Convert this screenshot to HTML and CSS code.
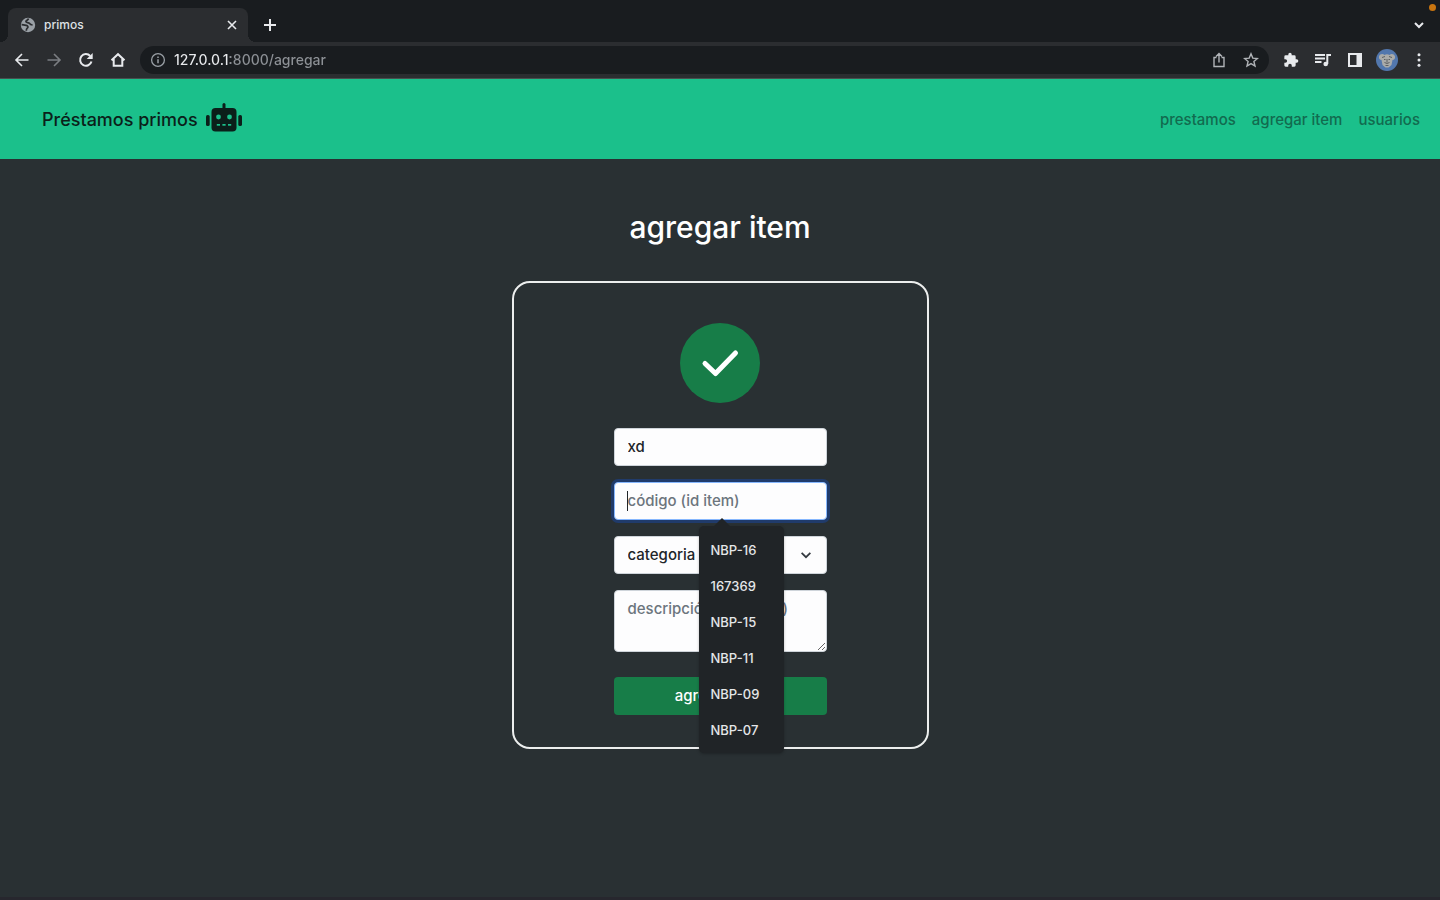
FILE: index.html
```html
<!DOCTYPE html>
<html lang="es">
<head>
<meta charset="utf-8">
<meta name="viewport" content="width=device-width, initial-scale=1">
<title>primos</title>
<link rel="stylesheet" href="styles.css">
</head>
<body>
<div class="browser">
  <div class="tabstrip">
    <div class="tab">
      <svg class="favicon" viewBox="0 0 16 16" aria-hidden="true"><circle cx="8" cy="8" r="7.2" fill="#9aa0a6"/><path d="M8.500 1.500c-.3 1.800-2.300 1.600-2.600 3 .1 1.500 2.600.7 3.600 1.900.7 1.300 1.600 1.500 3.100 1.600M1.600 7.600c1.400.2 3 .5 4.600.8 1.600.5 2.200 1.300 1.500 2.300-.8.700-1.500 1.300-1.400 3" fill="none" stroke="#2b2d30" stroke-width="1.700"/></svg>
      <span class="tab-title">primos</span>
      <button class="icon-btn tab-close" aria-label="Cerrar pestaña"><svg viewBox="0 0 16 16"><path d="M4 4l8 8M12 4l-8 8" class="line"/></svg></button>
    </div>
    <button class="icon-btn new-tab" aria-label="Nueva pestaña"><svg viewBox="0 0 16 16"><path d="M8 2v12M2 8h12" class="line bold"/></svg></button>
    <button class="icon-btn tab-search" aria-label="Buscar pestañas"><svg viewBox="0 0 16 16"><path d="M4 6l4 4 4-4" class="line bold"/></svg></button>
    <span class="recording-dot"></span>
  </div>
  <div class="toolbar">
    <button class="icon-btn" aria-label="Atrás"><svg viewBox="0 0 16 16"><path d="M14.500 8H2M8 2L2 8l6 6" class="line"/></svg></button>
    <button class="icon-btn dim" aria-label="Adelante"><svg viewBox="0 0 16 16"><path d="M1.500 8H14M8 2l6 6-6 6" class="line"/></svg></button>
    <button class="icon-btn" aria-label="Recargar"><svg viewBox="0 0 16 16"><path d="M13.500 9.500A5.800 5.800 0 1 1 12.200 4" class="line bold"/><path d="M14.700 1v6h-6z" fill="currentColor"/></svg></button>
    <button class="icon-btn" aria-label="Inicio"><svg viewBox="0 0 16 16"><path d="M1.500 8.200L8 2.200l6.500 6M3.700 7v6.800h8.600V7" class="line bold"/></svg></button>
    <div class="omnibox">
      <svg class="info" viewBox="0 0 16 16" aria-hidden="true"><circle cx="8" cy="8" r="6.400" fill="none" stroke="currentColor" stroke-width="1.300"/><path d="M8 7.200v4M8 4.400v1.500" stroke="currentColor" stroke-width="1.500"/></svg>
      <input class="url" type="text" aria-label="Dirección" value="127.0.0.1:8000/agregar">
      <button class="icon-btn soft" aria-label="Compartir"><svg viewBox="0 0 16 16"><path d="M5.500 5.500H3v9h10v-9h-2.500M8 10.500V2M5 4.500l3-3 3 3" class="line thin"/></svg></button>
      <button class="icon-btn soft" aria-label="Favorito"><svg viewBox="0 0 16 16"><path d="M8 1.800l1.800 4.300 4.600.4-3.500 3 1.100 4.500-4-2.400L4 14l1.100-4.500-3.500-3 4.600-.4z" class="line thin"/></svg></button>
    </div>
    <button class="icon-btn" aria-label="Extensiones"><svg viewBox="0 0 24 24"><path fill="currentColor" d="M20.500 11H19V7a2 2 0 0 0-2-2h-4V3.500a2.500 2.500 0 0 0-5 0V5H4a2 2 0 0 0-2 2v3.800h1.500a2.700 2.700 0 0 1 0 5.400H2V20a2 2 0 0 0 2 2h3.800v-1.500a2.700 2.700 0 0 1 5.400 0V22H17a2 2 0 0 0 2-2v-4h1.500a2.500 2.500 0 0 0 0-5z"/></svg></button>
    <button class="icon-btn" aria-label="Control multimedia"><svg viewBox="0 0 16 16"><path d="M0 3h10M0 6.500h10M0 10h6.500" class="line bold"/><path d="M12.300 12V3H16" class="line bold"/><circle cx="10.700" cy="12" r="2.300" fill="currentColor"/></svg></button>
    <button class="icon-btn" aria-label="Panel lateral"><svg viewBox="0 0 16 16"><path fill="currentColor" fill-rule="evenodd" d="M1 1h14v14H1zM3 3v10h6.500V3z"/></svg></button>
    <button class="icon-btn profile" aria-label="Perfil"><svg viewBox="0 0 22 22"><circle cx="11" cy="11" r="11" fill="#5277ad"/><path fill="#aaaba9" d="M3 7.500C4 4.500 7 4.500 8.500 6c1.500-1 3.500-1 5 0 1.500-1.500 4.500-1.500 5.500 1.500.3 2-.7 3.500-2.500 3.500l-1 5-3 2.500h-3l-3-2.500-1-5C3.700 11 2.700 9.500 3 7.500z"/><path fill="none" stroke="#5d6062" d="M6 8.500l3-1M16 8.500l-3-1M8 10.500h1.500M12.500 10.500H14M11 10v3.500M8.500 13.500l2.500 1 2.500-1M9.500 16.500h3"/></svg></button>
    <button class="icon-btn" aria-label="Menú"><svg viewBox="0 0 16 16" fill="currentColor"><circle cx="8" cy="2.800" r="1.500"/><circle cx="8" cy="8" r="1.500"/><circle cx="8" cy="13.200" r="1.500"/></svg></button>
  </div>
</div>

<header class="navbar">
  <a class="brand" href="#">Préstamos primos
    <svg viewBox="0 0 36 30" aria-hidden="true"><g fill="#0b1f1a"><rect x="16.500" y="0" width="3" height="8" rx="1.500"/><rect x="5.500" y="5" width="25" height="23.500" rx="4"/><rect x="0" y="12" width="3.700" height="11" rx="1.600"/><rect x="32.300" y="12" width="3.700" height="11" rx="1.600"/></g><g fill="#1bc08b"><circle cx="12.500" cy="14" r="2.400"/><circle cx="23.500" cy="14" r="2.400"/><rect x="10.800" y="21" width="3.200" height="1.700"/><rect x="16.400" y="21" width="3.200" height="1.700"/><rect x="22" y="21" width="3.200" height="1.700"/></g></svg></a>
  <nav class="links">
    <a href="#">prestamos</a>
    <a href="#">agregar item</a>
    <a href="#">usuarios</a>
  </nav>
</header>

<main class="page">
  <h1>agregar item</h1>
  <form class="card">
    <svg class="success" viewBox="0 0 80 80" aria-hidden="true"><circle cx="40" cy="40" r="40" fill="#177d48"/><path d="M25 40.500L35.500 50.500 55.500 30" fill="none" stroke="#fff" stroke-width="5" stroke-linecap="round" stroke-linejoin="round"/></svg>
    <div class="fields">
      <input class="control" type="text" aria-label="nombre" value="xd">
      <div class="autocomplete">
        <input class="control active" type="text" aria-label="código" placeholder="código (id item)">
        <ul class="suggestions">
          <li>NBP-16</li>
          <li>167369</li>
          <li>NBP-15</li>
          <li>NBP-11</li>
          <li>NBP-09</li>
          <li>NBP-07</li>
        </ul>
      </div>
      <div class="select-wrap">
        <select class="control" aria-label="categoria"><option>categoria</option></select>
        <svg viewBox="0 0 16 16" aria-hidden="true"><path d="M3 5.500l5 5 5-5" class="line bold"/></svg>
      </div>
      <textarea class="control" rows="2" aria-label="descripción" placeholder="descripción (opcional)"></textarea>
      <button class="submit" type="submit">agregar item</button>
    </div>
  </form>
</main>
</body>
</html>
```
FILE: styles.css
```css
*, *::before, *::after { box-sizing: border-box; }

body {
  margin: 0;
  min-height: 100vh;
  display: flex;
  flex-direction: column;
  background: #293033;
  border-bottom: 3px solid #27272e;
  color: #fff;
  font-family: Inter, "Liberation Sans", sans-serif;
  font-size: 15px;
  line-height: 24px;
}

button, input, select, textarea { font: inherit; }
a { text-decoration: none; }

.line {
  fill: none;
  stroke: currentColor;
  stroke-width: 1.6;
}
.line.bold { stroke-width: 2; }
.line.thin { stroke-width: 1.4; }

.icon-btn {
  flex: none;
  display: grid;
  place-items: center;
  width: 16px;
  height: 16px;
  padding: 0;
  border: 0;
  background: none;
  color: #e8eaed;
}
.icon-btn svg { display: block; width: 100%; height: 100%; }
.icon-btn.dim { color: #7b7e82; }
.icon-btn.soft { color: #b0b3b7; }

/* Browser chrome */
.tabstrip {
  position: relative;
  display: flex;
  align-items: center;
  height: 42px;
  padding: 8px 13px 0 8px;
  background: #191c1f;
}
.tab {
  position: relative;
  display: flex;
  align-items: center;
  gap: 8px;
  width: 240px;
  height: 34px;
  padding: 0 8px 0 12px;
  border-radius: 8px 8px 0 0;
  background: #2b2d30;
}
.tab::before, .tab::after {
  content: "";
  position: absolute;
  bottom: 0;
  width: 8px;
  height: 8px;
}
.tab::before { right: 100%; background: radial-gradient(circle at 0 0, transparent 8px, #2b2d30 8px); }
.tab::after { left: 100%; background: radial-gradient(circle at 100% 0, transparent 8px, #2b2d30 8px); }
.favicon { width: 16px; height: 16px; }
.tab-title { flex: 1; font-size: 12px; font-weight: 500; color: #dfe1e5; }
.new-tab { margin-left: 14px; }
.tab-search { margin-left: auto; }
.recording-dot {
  position: absolute;
  top: 4px;
  right: 4px;
  width: 7px;
  height: 7px;
  border-radius: 50%;
  background: #c87510;
}
.toolbar {
  display: flex;
  align-items: center;
  gap: 16px;
  height: 37px;
  padding: 0 13px 0 14px;
  border-bottom: 1px solid #46504e;
  background: #2b2d30;
}
.omnibox {
  flex: 1;
  display: flex;
  align-items: center;
  gap: 16px;
  height: 28px;
  margin-left: -2px;
  margin-right: -2px;
  padding: 0 10px;
  border-radius: 14px;
  background: #191c1f;
}
.info { width: 16px; height: 16px; color: #9aa0a6; }
.url {
  flex: 1;
  min-width: 0;
  height: 24px;
  margin-left: -8px;
  padding: 0;
  border: 0;
  outline: 0;
  background: linear-gradient(90deg, #e8eaed 56px, #8d9196 56px);
  -webkit-background-clip: text;
  background-clip: text;
  -webkit-text-fill-color: transparent;
  font-size: 14px;
  font-weight: 500;
}
.profile { width: 22px; height: 22px; margin: 0 -3px; }

/* Site navigation */
.navbar {
  display: flex;
  align-items: center;
  justify-content: space-between;
  height: 80px;
  padding: 2px 20px 0 42px;
  background: #1bc08b;
}
.brand {
  display: flex;
  align-items: center;
  gap: 8px;
  color: #0b1f1a;
  font-size: 18px;
  font-weight: 500;
}
.brand svg { width: 36px; height: 30px; margin-bottom: 4px; }
.links { display: flex; gap: 16px; }
.links a { color: #126b4f; font-weight: 500; }

/* Form */
.page {
  flex: 1;
  display: flex;
  flex-direction: column;
  align-items: center;
  padding: 48px 16px;
}
h1 {
  margin: 0 0 34px;
  font-size: 30px;
  font-weight: 500;
  line-height: 40px;
}
.card {
  display: flex;
  flex-direction: column;
  align-items: center;
  gap: 25px;
  width: 100%;
  max-width: 417px;
  padding: 40px 32px 32px;
  border: 2px solid #eceeee;
  border-radius: 18px;
}
.success { width: 80px; height: 80px; }
.fields {
  display: flex;
  flex-direction: column;
  gap: 16px;
  width: 100%;
  max-width: 213px;
}
.control {
  display: block;
  width: 100%;
  min-height: 38px;
  margin: 0;
  padding: 6px 13px;
  border: 1px solid #ced4da;
  border-radius: 4px;
  outline: 0;
  background: #fdfdfe;
  color: #212529;
  font-weight: 500;
}
.control::placeholder { color: #6c757d; opacity: 1; }
.active {
  border-color: #86b7fe;
  box-shadow: 0 0 0 3px #203b6b;
  background: linear-gradient(#212529, #212529) 12px 50% / 1px 20px no-repeat #fdfdfe;
}
textarea.control { height: 62px; resize: vertical; }
.select-wrap { position: relative; color: #343a40; }
.select-wrap select { appearance: none; }
.select-wrap svg {
  position: absolute;
  top: 12px;
  right: 14px;
  width: 14px;
  height: 14px;
  pointer-events: none;
}
.submit {
  height: 38px;
  margin-top: 9px;
  padding: 0;
  border: 0;
  border-radius: 4px;
  background: #177d48;
  color: #fff;
  font-weight: 500;
}

.autocomplete { position: relative; }
.suggestions {
  position: absolute;
  z-index: 1;
  top: 44px;
  left: 85px;
  width: 85px;
  margin: 0;
  padding: 6px 12px 5px;
  border-radius: 5px;
  background: #202427;
  box-shadow: 0 1px 3px #0004;
  list-style: none;
  color: #e4e6e8;
  font-size: 13px;
  font-weight: 500;
  line-height: 36px;
}
.suggestions::before {
  content: "";
  position: absolute;
  left: 15px;
  bottom: 100%;
  border: 8px solid transparent;
  border-top: 0;
  border-bottom-color: #202427;
}
```
